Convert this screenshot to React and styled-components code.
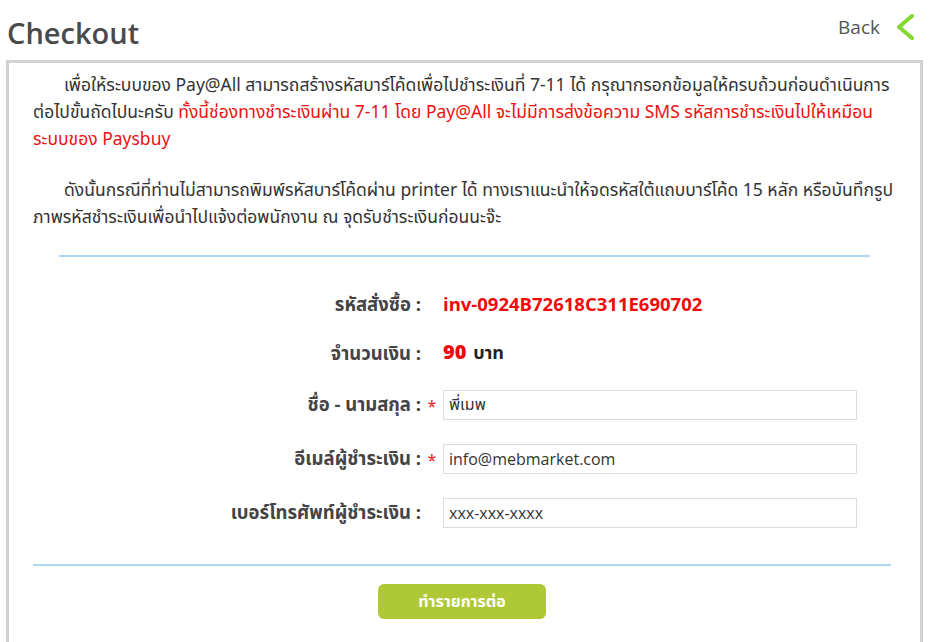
import React from 'react';
import styled, { createGlobalStyle } from 'styled-components';

const GlobalStyle = createGlobalStyle`
    body {
        margin: 0;
        background: #fff;
        font-family: "Noto Sans Thai", "Open Sans", "Noto Sans", sans-serif;
        color: #333;
    }
`;

const fields = [
    { label: 'ชื่อ - นามสกุล :', value: 'พี่เมพ', required: true },
    { label: 'อีเมล์ผู้ชำระเงิน :', value: 'info@mebmarket.com', required: true },
    { label: 'เบอร์โทรศัพท์ผู้ชำระเงิน :', value: 'xxx-xxx-xxxx', required: false },
];

const App = () => {
    return (
        <Page>
            <GlobalStyle />
            <Header>
                <Title>Checkout</Title>
                <BackLink href="#">
                    Back
                    <svg width="20" height="26" viewBox="0 0 20 26">
                        <path d="M17 2 L4 13 L17 24" fill="none" stroke="#84d830" strokeWidth="4" strokeLinecap="round" strokeLinejoin="round" />
                    </svg>
                </BackLink>
            </Header>
            <Box>
                <Paragraph>
                    เพื่อให้ระบบของ Pay@All สามารถสร้างรหัสบาร์โค้ดเพื่อไปชำระเงินที่ 7-11 ได้ กรุณากรอกข้อมูลให้ครบถ้วนก่อนดำเนินการ
                    <br />
                    ต่อไปขั้นถัดไปนะครับ{' '}
                    <Red>
                        ทั้งนี้ช่องทางชำระเงินผ่าน 7-11 โดย Pay@All จะไม่มีการส่งข้อความ SMS รหัสการชำระเงินไปให้เหมือน
                        <br />
                        ระบบของ Paysbuy
                    </Red>
                </Paragraph>
                <Paragraph>
                    ดังนั้นกรณีที่ท่านไม่สามารถพิมพ์รหัสบาร์โค้ดผ่าน printer ได้ ทางเราแนะนำให้จดรหัสใต้แถบบาร์โค้ด 15 หลัก หรือบันทึกรูป
                    <br />
                    ภาพรหัสชำระเงินเพื่อนำไปแจ้งต่อพนักงาน ณ จุดรับชำระเงินก่อนนะจ๊ะ
                </Paragraph>
                <Divider $inset />
                <Form>
                    <Label>รหัสสั่งซื้อ :</Label>
                    <Star />
                    <OrderCode>inv-0924B72618C311E690702</OrderCode>

                    <Label>จำนวนเงิน :</Label>
                    <Star />
                    <Amount>
                        <strong>90</strong> บาท
                    </Amount>

                    {fields.map(f => (
                        <React.Fragment key={f.label}>
                            <Label $input>{f.label}</Label>
                            <Star>{f.required ? '*' : ''}</Star>
                            <Input defaultValue={f.value} />
                        </React.Fragment>
                    ))}
                </Form>
                <Divider />
                <Actions>
                    <Button>ทำรายการต่อ</Button>
                </Actions>
            </Box>
        </Page>
    );
};

export default App;

const Page = styled.div`
    width: 940px;
    height: 642px;
    overflow: hidden;
`;

const Header = styled.div`
    display: flex;
    justify-content: space-between;
    align-items: center;
    height: 60px;
    padding: 0 25px 0 7px;
`;

const Title = styled.h1`
    margin: 4px 0 0;
    font-family: "Open Sans", sans-serif;
    font-size: 29px;
    font-weight: 600;
    color: #4a4a4a;
`;

const BackLink = styled.a`
    display: flex;
    align-items: center;
    gap: 15px;
    margin-top: -6px;
    font-family: "Open Sans", sans-serif;
    font-size: 19px;
    color: #555;
    text-decoration: none;
`;

const Box = styled.div`
    margin: 0 17px 0 6px;
    border: 3px solid #d2d2d2;
    border-bottom: none;
    padding: 9px 24px 40px;
`;

const Paragraph = styled.p`
    margin: 0 0 24px;
    font-size: 17.5px;
    line-height: 27px;
    text-indent: 31px;
    white-space: nowrap;
    color: #333;
`;

const Red = styled.span`
    color: #f01010;
`;

const Divider = styled.hr`
    border: none;
    height: 2px;
    background: #aed8f2;
    margin: ${p => (p.$inset ? '0 26px 36px' : '36px 5px 18px 0')};
`;

const Form = styled.div`
    display: grid;
    grid-template-columns: 388px 22px 414px;
    row-gap: 24px;
    align-items: center;
`;

const Label = styled.div`
    text-align: right;
    font-size: 18.5px;
    font-weight: 700;
    color: #444;
    line-height: ${p => (p.$input ? '30px' : '24px')};
`;

const Star = styled.span`
    color: #e82020;
    font-size: 16px;
    text-align: center;
    padding-top: 4px;
`;

const OrderCode = styled.div`
    font-size: 18.5px;
    font-weight: 700;
    color: #f00a0a;
    line-height: 24px;
`;

const Amount = styled.div`
    font-size: 18px;
    font-weight: 700;
    color: #222;
    line-height: 24px;

    strong {
        font-size: 20px;
        color: #f00a0a;
        margin-right: 2px;
    }
`;

const Input = styled.input`
    box-sizing: border-box;
    height: 30px;
    width: 414px;
    border: 1px solid #dcdcdc;
    padding: 0 5px;
    font-family: "Open Sans", "Noto Sans Thai", sans-serif;
    font-size: 16px;
    color: #333;
    outline: none;
`;

const Actions = styled.div`
    display: flex;
    padding-left: 345px;
`;

const Button = styled.button`
    width: 168px;
    height: 35px;
    border: none;
    border-radius: 6px;
    background: #afc936;
    color: #fff;
    font-family: "Noto Sans Thai", "Open Sans", sans-serif;
    font-size: 16px;
    font-weight: 700;
    cursor: pointer;
`;
